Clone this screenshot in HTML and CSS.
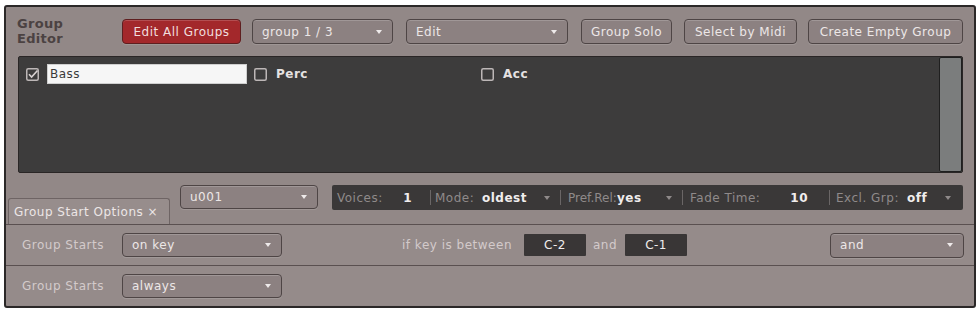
FILE: index.html
```html
<!DOCTYPE html>
<html>
<head>
<meta charset="utf-8">
<link rel="stylesheet" href="styles.css">
</head>
<body>
<div class="frame">
  <div class="header">
    <div class="title">Group<br>Editor</div>
    <div class="btn red w-eag">Edit All Groups</div>
    <div class="btn dd w-grp"><span>group 1 / 3</span><i class="arrow"></i></div>
    <div class="btn dd w-edit"><span>Edit</span><i class="arrow"></i></div>
    <div class="btn w-solo">Group Solo</div>
    <div class="btn w-midi">Select by Midi</div>
    <div class="btn w-create">Create Empty Group</div>
  </div>
  <div class="list">
    <div class="items">
      <div class="item"><span class="cb checked"><svg viewBox="0 0 13 13" width="13" height="13"><rect x="0.75" y="0.75" width="11.5" height="11.5" rx="1.5" fill="none" stroke="#bdb7b7" stroke-width="1.5"/><path d="M3 6.2 L5.6 9 L11.5 2.5" fill="none" stroke="#d8d2d2" stroke-width="1.6"/></svg></span><span class="name-input">Bass</span></div>
      <div class="item"><span class="cb"><svg viewBox="0 0 13 13" width="13" height="13"><rect x="0.75" y="0.75" width="11.5" height="11.5" rx="1.5" fill="none" stroke="#bdb7b7" stroke-width="1.5"/></svg></span><span class="name">Perc</span></div>
      <div class="item"><span class="cb"><svg viewBox="0 0 13 13" width="13" height="13"><rect x="0.75" y="0.75" width="11.5" height="11.5" rx="1.5" fill="none" stroke="#bdb7b7" stroke-width="1.5"/></svg></span><span class="name">Acc</span></div>
    </div>
    <div class="scrollbar"></div>
  </div>
  <div class="midrow">
    <div class="tab">Group Start Options ×</div>
    <div class="btn dd w-u001"><span>u001</span><i class="arrow"></i></div>
    <div class="infobar">
      <div class="seg s1"><span class="lbl">Voices:</span><span class="val">1</span></div>
      <span class="sep"></span>
      <div class="seg s2"><span class="lbl">Mode:</span><span class="val">oldest</span><i class="arrow"></i></div>
      <span class="sep"></span>
      <div class="seg s3"><span class="lbl">Pref.Rel:</span><span class="val">yes</span><i class="arrow"></i></div>
      <span class="sep"></span>
      <div class="seg s4"><span class="lbl">Fade Time:</span><span class="val">10</span></div>
      <span class="sep"></span>
      <div class="seg s5"><span class="lbl">Excl. Grp:</span><span class="val">off</span><i class="arrow"></i></div>
    </div>
  </div>
  <div class="optrow">
    <span class="olabel">Group Starts</span>
    <div class="btn dd w-start"><span>on key</span><i class="arrow"></i></div>
    <span class="olabel keytext">if key is between</span>
    <span class="keybox">C-2</span>
    <span class="olabel andtext">and</span>
    <span class="keybox">C-1</span>
    <div class="btn dd w-and"><span>and</span><i class="arrow"></i></div>
  </div>
  <div class="optrow last">
    <span class="olabel">Group Starts</span>
    <div class="btn dd w-start"><span>always</span><i class="arrow"></i></div>
  </div>
</div>
</body>
</html>
```
FILE: styles.css
```css
* { box-sizing: border-box; }
body {
  margin: 0;
  background: #ffffff;
  font-family: "DejaVu Sans", "Liberation Sans", sans-serif;
  font-size: 12px;
  letter-spacing: 0.5px;
}
.frame {
  margin: 5px 0 0 4px;
  width: 972px;
  height: 303px;
  border: 2px solid #2b2828;
  border-radius: 3px;
  background: #928887;
  display: flex;
  flex-direction: column;
}
.header {
  display: flex;
  align-items: flex-start;
  height: 49px;
  padding: 12px 0 0 11px;
}
.title {
  width: 105px;
  font-weight: bold;
  font-size: 13px;
  line-height: 15px;
  color: #4b4242;
  letter-spacing: 0.3px;
  margin-top: -3px;
}
.btn {
  height: 25px;
  border: 1px solid #4e4545;
  border-radius: 4px;
  background: #8c8181;
  box-shadow: inset 0 1px 0 rgba(255,255,255,0.18), 0 1px 0 rgba(255,255,255,0.12);
  color: #ece7e7;
  display: flex;
  align-items: center;
  justify-content: center;
  white-space: nowrap;
  flex: none;
}
.btn.red {
  background: #a3282b;
  border-color: #5e1f20;
  color: #f1dede;
}
.btn.dd {
  justify-content: space-between;
  padding: 0 10px 0 9px;
}
.arrow {
  display: inline-block;
  width: 0; height: 0;
  border-left: 3.5px solid transparent;
  border-right: 3.5px solid transparent;
  border-top: 4px solid #eeeaea;
}
.w-eag { width: 119px; }
.w-grp { width: 141px; margin-left: 11px; }
.w-edit { width: 162px; margin-left: 13px; }
.w-solo { width: 91px; margin-left: 13px; }
.w-midi { width: 113px; margin-left: 12px; }
.w-create { width: 155px; margin-left: 11px; }

.list {
  margin-left: 12px;
  width: 945px;
  height: 117px;
  background: #3d3c3c;
  border: 1px solid #2a2626;
  border-radius: 2px;
  display: flex;
  justify-content: space-between;
}
.items {
  display: grid;
  grid-template-columns: 228px 227px 227px;
  align-items: center;
  padding: 6px 0 0 7px;
  height: 28px;
}
.item {
  display: flex;
  align-items: center;
  height: 21px;
}
.cb { width: 13px; height: 13px; display: block; flex: none; }
.cb svg { display: block; }
.name-input {
  margin-left: 8px;
  width: 200px;
  height: 20px;
  background: #f6f6f6;
  border: 1px solid #cfcfcf;
  color: #3a3a3a;
  padding-left: 2px;
  line-height: 18px;
}
.name {
  margin-left: 9px;
  color: #e6e2e2;
  font-weight: bold;
}
.scrollbar {
  width: 23px;
  height: 100%;
  background: #7b7d7d;
  border: 1px solid #1f1f1f;
  border-radius: 2px;
}
.midrow {
  display: flex;
  align-items: flex-start;
  height: 51px;
  padding-top: 12px;
}
.tab {
  align-self: flex-end;
  margin-left: 2px;
  width: 162px;
  height: 26px;
  border: 1px solid #6e6464;
  border-bottom: none;
  border-radius: 3px 3px 0 0;
  background: #978d8c;
  color: #ece6e6;
  padding: 6px 0 0 5px;
  white-space: nowrap;
}
.w-u001 { width: 138px; margin-left: 10px; height: 24px; }
.infobar {
  margin-left: 14px;
  width: 631px;
  height: 25px;
  background: #3a3838;
  border-radius: 2px;
  display: flex;
  align-items: center;
  white-space: nowrap;
}
.seg {
  display: flex;
  align-items: center;
  height: 100%;
  flex: none;
}
.seg .val { color: #f0eded; font-weight: bold; }
.seg .lbl { color: #8f8a8a; }
.seg .arrow { margin-left: auto; border-top-color: #8f8a8a; }
.sep { width: 1px; height: 15px; background: #6a6666; flex: none; }
.s1 { width: 98px; padding: 0 18px 0 5px; }
.s1 .val { margin-left: auto; }
.s2 { width: 129px; padding: 0 10px 0 4px; }
.s2 .lbl { width: 47px; }
.s3 { width: 121px; padding: 0 10px 0 7px; }
.s3 .lbl { width: 49px; letter-spacing: 0; }
.s4 { width: 146px; padding: 0 21px 0 7px; }
.s4 .val { margin-left: auto; }
.s5 { width: 133px; padding: 0 12px 0 6px; }
.s5 .lbl { width: 71px; }

.optrow {
  display: flex;
  align-items: center;
  height: 41px;
  border-top: 1px solid #5a5050;
  background: #958b8a;
  padding-left: 16px;
}
.optrow.last { height: 40px; }
.olabel { color: #d3caca; width: 100px; white-space: nowrap; }
.w-start { width: 160px; height: 24px; }
.keytext { width: auto; margin-left: 120px; }
.keybox {
  width: 62px;
  height: 22px;
  background: #393636;
  color: #f0eded;
  display: flex;
  align-items: center;
  justify-content: center;
  border-radius: 1px;
  margin-left: 12px;
}
.andtext { width: auto; margin-left: 7px; margin-right: -4px; }
.w-and { width: 134px; margin-left: 143px; }
```
